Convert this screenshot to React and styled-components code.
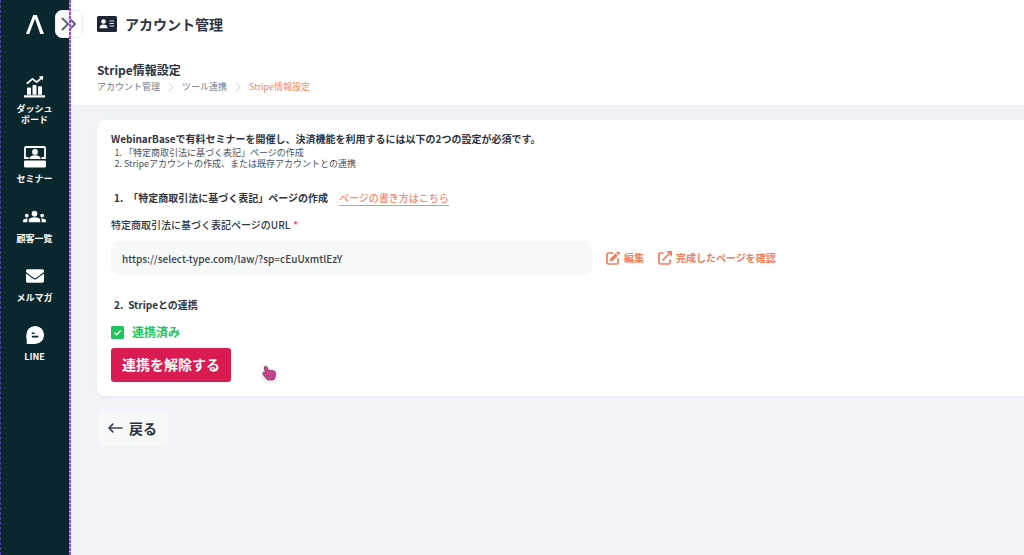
import styled, { createGlobalStyle } from "styled-components";
import { FaEnvelope } from "react-icons/fa";
import { MdGroups } from "react-icons/md";

const crumbs = ["アカウント管理", "ツール連携"];

const menu = [
  { label: "ダッシュボード", icon: <ChartIcon /> },
  { label: "セミナー", icon: <SeminarIcon /> },
  { label: "顧客一覧", icon: <MdGroups size={23} /> },
  { label: "メルマガ", icon: <FaEnvelope size={18} /> },
  { label: "LINE", icon: <LineIcon /> },
];

function App() {
  return (
    <Layout>
      <GlobalStyle />
      <Sidebar>
        <Logo href="#" aria-label="ホーム">
          <LogoMark />
        </Logo>
        <ToggleButton type="button" aria-label="メニューを開く">
          <ChevronsIcon />
        </ToggleButton>
        <Menu>
          {menu.map((item) => (
            <MenuLink href="#" key={item.label}>
              <MenuIcon>{item.icon}</MenuIcon>
              <span>{item.label}</span>
            </MenuLink>
          ))}
        </Menu>
      </Sidebar>

      <Main>
        <Header>
          <TitleRow>
            <AccountIcon />
            <Title>アカウント管理</Title>
          </TitleRow>
          <SubTitle>Stripe情報設定</SubTitle>
          <Breadcrumb>
            {crumbs.map((crumb) => (
              <Crumb key={crumb}>
                <a href="#">{crumb}</a>
                <CrumbArrow />
              </Crumb>
            ))}
            <Crumb $current>Stripe情報設定</Crumb>
          </Breadcrumb>
        </Header>

        <Content>
          <Card>
            <Lead>
              WebinarBaseで有料セミナーを開催し、決済機能を利用するには以下の2つの設定が必須です。
            </Lead>
            <Steps>
              <li>「特定商取引法に基づく表記」ページの作成</li>
              <li>Stripeアカウントの作成、または既存アカウントとの連携</li>
            </Steps>

            <SectionRow>
              <SectionTitle>
                <span>1.</span>
                <span>「特定商取引法に基づく表記」ページの作成</span>
              </SectionTitle>
              <GuideLink href="#">ページの書き方はこちら</GuideLink>
            </SectionRow>
            <Label htmlFor="law-url">
              特定商取引法に基づく表記ページのURL<Required>*</Required>
            </Label>
            <UrlRow>
              <UrlInput
                id="law-url"
                type="text"
                readOnly
                value="https://select-type.com/law/?sp=cEuUxmtlEzY"
              />
              <ActionLink href="#">
                <EditIcon />
                編集
              </ActionLink>
              <ActionLink href="#">
                <ExternalIcon />
                完成したページを確認
              </ActionLink>
            </UrlRow>

            <StripeTitle>
              <span>2.</span>
              <span>Stripeとの連携</span>
            </StripeTitle>
            <Status>
              <StatusCheck />
              連携済み
            </Status>
            <ReleaseButton type="button">連携を解除する</ReleaseButton>
            <Pointer>
              <HandIcon />
            </Pointer>
          </Card>
          <BackButton type="button">
            <BackArrow />
            戻る
          </BackButton>
        </Content>
      </Main>
    </Layout>
  );
}

export default App;

function LogoMark() {
  return (
    <svg width="18" height="19" viewBox="0 0 18 19" fill="#fff">
      <path d="M7.2 0h3.6L18 19h-3.7L9 3.8 3.2 19H0z" />
    </svg>
  );
}

function ChevronsIcon() {
  return (
    <svg
      width="16"
      height="14"
      viewBox="0 0 16 14"
      fill="none"
      stroke="#5b6472"
      strokeWidth="2"
      strokeLinecap="round"
      strokeLinejoin="round"
    >
      <path d="M1.5 1.5 7 7l-5.5 5.500M8.500 1.500 14 7l-5.500 5.500" />
    </svg>
  );
}

function ChartIcon() {
  return (
    <svg width="21" height="22" viewBox="0 0 21 22" fill="#fff">
      <path d="M0 19.3h21v2.2H0zM3 12.5a1 1 0 0 1 1-1h2a1 1 0 0 1 1 1v6.2H3zM8.500 10a1 1 0 0 1 1-1h2a1 1 0 0 1 1 1v8.700h-4zM14 11.200a1 1 0 0 1 1-1h2a1 1 0 0 1 1 1v7.500h-4z" />
      <path
        d="M3.3 7.200 8.500 2.900l4.200 3.200 4.600-4"
        fill="none"
        stroke="#fff"
        strokeWidth="1.8"
        strokeLinecap="round"
        strokeLinejoin="round"
      />
      <path d="M14.800.4 19.200 0l-.4 4.600z" />
    </svg>
  );
}

function SeminarIcon() {
  return (
    <svg width="22" height="22" viewBox="0 0 22 22" fill="#fff">
      <path
        d="M4.500 12H1V2q0-1 1-1h18q1 0 1 1v10h-3.500"
        fill="none"
        stroke="#fff"
        strokeWidth="1.800"
      />
      <circle cx="11" cy="5.900" r="2.900" />
      <path d="M5.200 13c.4-2.600 2.300-3.700 5.800-3.700s5.400 1.100 5.800 3.700z" />
      <path d="M1 14.600h20q1 0 1 1v4.400q0 1.500-1.500 1.500h-19Q0 21.500 0 20v-4.400q0-1 1-1z" />
    </svg>
  );
}

function LineIcon() {
  return (
    <svg width="18" height="18" viewBox="0 0 18 18">
      <path
        d="M9.200 0A8.800 8.800 0 0 1 18 8.900 8.800 8.800 0 0 1 9.200 18H.7V13A9 9 0 0 1 .3 8.900 8.900 8.900 0 0 1 9.200 0z"
        fill="#fff"
      />
      <path
        d="M5.800 7.200h2.800M5.800 10.600h6.600"
        stroke="#0a272e"
        strokeWidth="1.600"
      />
    </svg>
  );
}

function AccountIcon() {
  return (
    <svg width="20" height="16" viewBox="0 0 20 16">
      <rect width="20" height="16" rx="1.500" fill="#1d2438" />
      <circle cx="6.500" cy="5.500" r="2.300" fill="#fff" />
      <path d="M2.500 12.200C2.500 9.500 4.200 8.600 6.500 8.600s4 .9 4 3.600z" fill="#fff" />
      <path
        d="M12.500 5H17M12.500 7.500H17M12.500 10H17"
        stroke="#e0e2e8"
        strokeWidth="1.200"
      />
    </svg>
  );
}

function CrumbArrow() {
  return (
    <svg
      width="6"
      height="10"
      viewBox="0 0 6 10"
      fill="none"
      stroke="#cfd3dc"
      strokeWidth="1"
    >
      <path d="m1 .8 4 4.200-4 4.200" />
    </svg>
  );
}

function EditIcon() {
  return (
    <svg width="14" height="14" viewBox="0 0 14 14">
      <path
        d="M6.500 2H2.200Q1 2 1 3.200v8.600Q1 13 2.200 13h8.600q1.200 0 1.200-1.200V7.800"
        fill="none"
        stroke="#f27c5e"
        strokeWidth="1.700"
        strokeLinecap="round"
      />
      <path
        d="m4.300 7.600 5.200-5.200 2.300 2.300-5.200 5.200-2.900.6zM10.200 1.700l1.100-1.100q.6-.6 1.200 0l1.100 1.100q.6.600 0 1.200l-1.100 1.100z"
        fill="#f27c5e"
      />
    </svg>
  );
}

function ExternalIcon() {
  return (
    <svg width="14" height="14" viewBox="0 0 14 14">
      <path
        d="M5 2H2.200Q1 2 1 3.200v8.600Q1 13 2.200 13h8.600q1.200 0 1.200-1.200V9M5 9l6.500-6.500"
        fill="none"
        stroke="#f27c5e"
        strokeWidth="1.700"
        strokeLinecap="round"
      />
      <path d="M8.300 0H14v5.700z" fill="#f27c5e" />
    </svg>
  );
}

function StatusCheck() {
  return (
    <svg width="13" height="13" viewBox="0 0 13 13">
      <rect width="13" height="13" rx="1.500" fill="#21c55d" />
      <path
        d="m3.500 6.700 2.100 2 4-4.200"
        fill="none"
        stroke="#fff"
        strokeWidth="1.400"
      />
    </svg>
  );
}

function BackArrow() {
  return (
    <svg
      width="15"
      height="10"
      viewBox="0 0 15 10"
      fill="none"
      stroke="#3f4657"
      strokeWidth="1.700"
      strokeLinecap="round"
      strokeLinejoin="round"
    >
      <path d="M14 5H1M4.800 1.200 1 5l3.800 3.800" />
    </svg>
  );
}

function HandIcon() {
  return (
    <svg width="14" height="16" viewBox="0 0 14 16">
      <path
        d="M3.200 1.300c.9-.4 1.600.1 1.900 1l1 3.100 1.300-.3 1.200.6 1.300-.3 1.200.7 1.200-.1 1 1.400-.1 4.100-1.300 3.200H5.500L2.600 11.500.9 8.500c-.2-1 .7-1.400 1.400-.9l1.300.9-1.200-5.500q-.2-1.300.8-1.700z"
        fill="#e23a8c"
        stroke="#6d4a68"
        strokeWidth="1"
      />
      <path
        d="M6.500 9.500v2.500M8.500 9.500v2.500M10.500 9.300v2.500"
        stroke="#6d4a68"
        strokeWidth=".8"
      />
    </svg>
  );
}

const GlobalStyle = createGlobalStyle`
  * {
    box-sizing: border-box;
  }

  body {
    margin: 0;
    background: #f2f3f8;
    color: #2f3443;
    font-family: "Noto Sans CJK JP", sans-serif;
    font-size: 10px;
    line-height: 16px;
  }

  a {
    color: inherit;
    text-decoration: none;
  }

  button,
  input {
    border: none;
    font-family: inherit;
  }

  svg {
    display: block;
    flex-shrink: 0;
  }
`;

const Layout = styled.div`
  display: flex;
  min-height: 100vh;
`;

const Sidebar = styled.aside`
  position: relative;
  display: flex;
  flex-direction: column;
  align-items: center;
  flex: 0 0 70px;
  padding: 15px 2px 0 0;
  background: #0a272e;
  border-left: 1px dashed #5140a8;

  &::after {
    content: "";
    position: absolute;
    top: 0;
    right: -1px;
    bottom: 0;
    width: 2px;
    background: repeating-linear-gradient(#8b4cf5 0 3px, #d9c9fb 3px 4px);
    pointer-events: none;
  }
`;

const Logo = styled.a`
  display: block;
`;

const ToggleButton = styled.button`
  position: absolute;
  top: 10px;
  right: -13px;
  display: flex;
  align-items: center;
  justify-content: center;
  width: 28px;
  height: 28px;
  padding: 0;
  background: #fff;
  border: 1px solid #ebe9f8;
  border-radius: 7px;
  cursor: pointer;
`;

const Menu = styled.nav`
  display: flex;
  flex-direction: column;
  gap: 21px;
  margin-top: 42px;
`;

const MenuLink = styled.a`
  display: flex;
  flex-direction: column;
  align-items: center;
  gap: 5px;
  width: 36px;
  color: #fff;
  font-size: 9px;
  font-weight: 700;
  line-height: 11px;
  text-align: center;
`;

const MenuIcon = styled.span`
  display: flex;
  align-items: center;
  justify-content: center;
  min-height: 22px;
`;

const Main = styled.main`
  flex: 1;
  min-width: 0;
`;

const Header = styled.header`
  padding: 14px 27px 10px;
  background: #fff;
`;

const TitleRow = styled.div`
  display: flex;
  align-items: center;
  gap: 8px;
`;

const Title = styled.h1`
  margin: 0;
  font-size: 14px;
  line-height: 20px;
`;

const SubTitle = styled.h2`
  margin: 27px 0 0;
  font-size: 12px;
  line-height: 18px;
`;

const Breadcrumb = styled.nav`
  display: flex;
  align-items: center;
  gap: 8px;
  font-size: 9px;
`;

const Crumb = styled.span`
  display: flex;
  align-items: center;
  gap: 8px;
  color: ${(props) => (props.$current ? "#fa7f62" : "#747a89")};
`;

const Content = styled.div`
  padding: 15px 0 26px 27px;
`;

const Card = styled.section`
  position: relative;
  padding: 11px 14px 14px;
  background: #fff;
  border-radius: 7px 0 0 7px;
  box-shadow: 0 1px 2px rgba(40, 50, 90, 0.08);
`;

const Lead = styled.p`
  margin: 0;
  font-size: 10px;
  font-weight: 700;
`;

const Steps = styled.ol`
  margin: 0;
  padding-left: 13px;
  font-size: 9px;
  line-height: 11px;
  color: #4a4f5e;
`;

const SectionRow = styled.div`
  display: flex;
  align-items: center;
  gap: 11px;
  margin-top: 21px;
  padding-left: 3px;
`;

const SectionTitle = styled.h3`
  display: flex;
  gap: 5px;
  margin: 0;
  font-size: 10px;
`;

const StripeTitle = styled(SectionTitle)`
  margin-top: 22px;
  padding-left: 3px;
`;

const GuideLink = styled.a`
  color: #fa8a70;
  font-weight: 500;
  border-bottom: 1px solid #fa8a70;
  line-height: 14px;
`;

const Label = styled.label`
  display: block;
  margin-top: 11px;
  font-weight: 500;
`;

const Required = styled.span`
  margin-left: 3px;
  color: #f5315f;
`;

const UrlRow = styled.div`
  display: flex;
  align-items: center;
  gap: 14px;
  margin-top: 8px;
`;

const UrlInput = styled.input`
  flex: 0 1 481px;
  min-width: 0;
  height: 34px;
  padding: 0 11px;
  background: #f7f9f9;
  border-radius: 8px;
  color: #3a3f4e;
  font-size: 10px;
  font-weight: 500;
  outline: none;
`;

const ActionLink = styled.a`
  display: flex;
  align-items: center;
  gap: 4px;
  color: #f27c5e;
  font-weight: 700;
`;

const Status = styled.div`
  display: flex;
  align-items: center;
  gap: 8px;
  margin-top: 11px;
  color: #21c55d;
  font-size: 12px;
  font-weight: 700;
`;

const ReleaseButton = styled.button`
  display: block;
  height: 34px;
  margin-top: 8px;
  padding: 0 11px 2px;
  background: #d91b52;
  border-radius: 3px;
  color: #fff;
  font-size: 14px;
  font-weight: 700;
  cursor: pointer;
`;

const Pointer = styled.span`
  position: absolute;
  bottom: 15px;
  left: 165px;
  filter: drop-shadow(0 1px 2px rgba(60, 60, 80, 0.3));
`;

const BackButton = styled.button`
  display: flex;
  align-items: center;
  gap: 6px;
  height: 35px;
  margin-top: 15px;
  padding: 0 11px 2px;
  background: #f7f9f9;
  border-radius: 5px;
  color: #2b3040;
  font-size: 14px;
  font-weight: 700;
  cursor: pointer;
`;
